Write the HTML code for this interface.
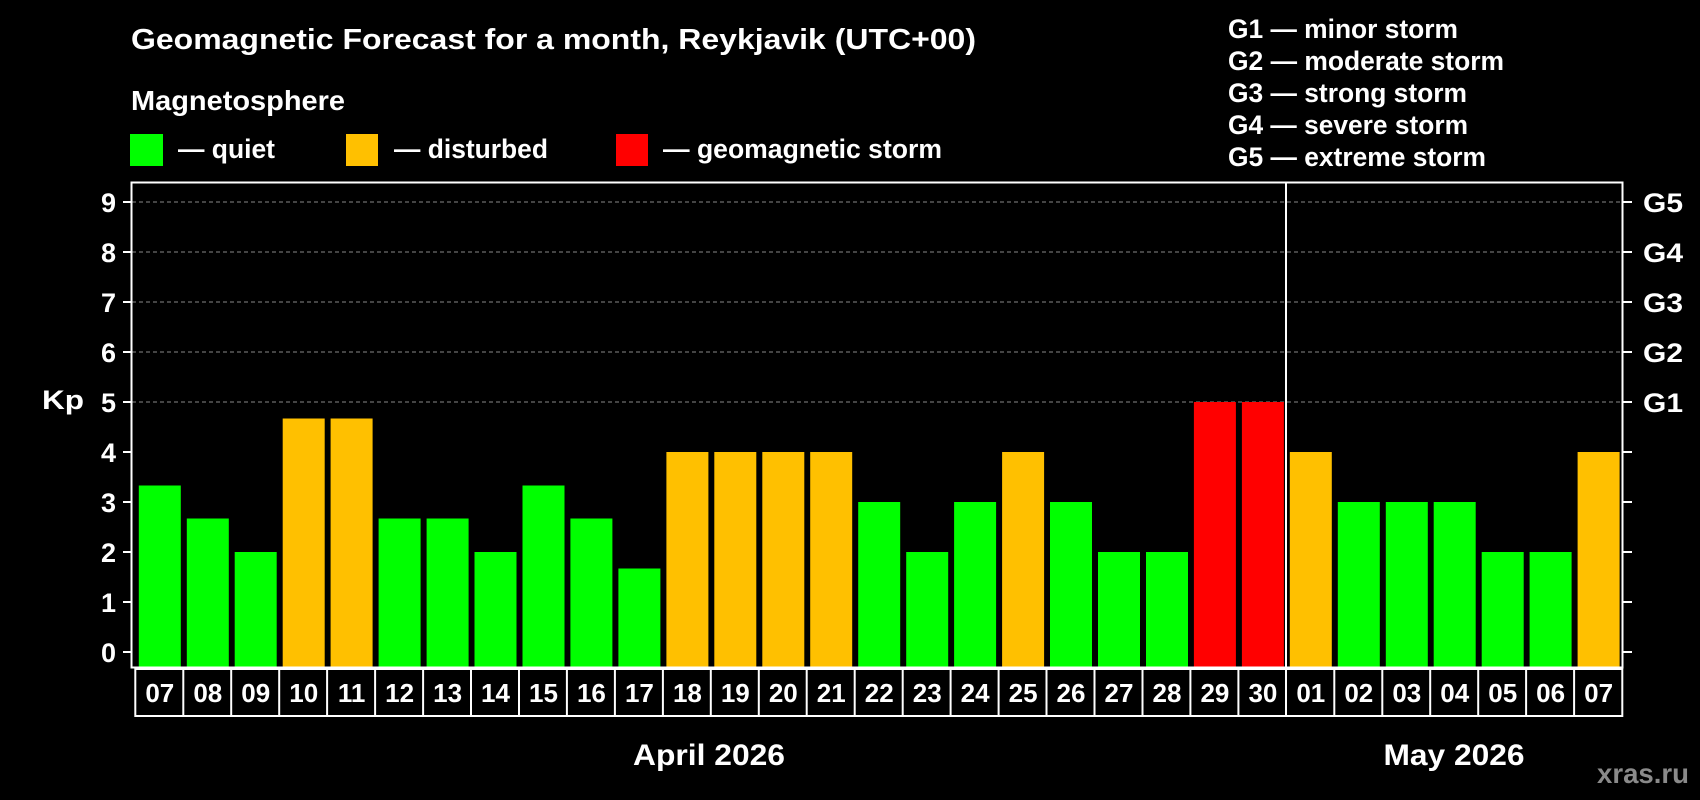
<!DOCTYPE html>
<html><head><meta charset="utf-8"><style>
html,body{margin:0;padding:0;background:#000;width:1700px;height:800px;overflow:hidden}
svg{display:block}
text{font-family:"Liberation Sans",Arial,sans-serif;font-weight:bold;fill:#fff}
</style></head><body>
<svg width="1700" height="800" viewBox="0 0 1700 800" xmlns="http://www.w3.org/2000/svg">
<rect width="1700" height="800" fill="#000"/>
<text x="131" y="49" font-size="29" textLength="845" lengthAdjust="spacingAndGlyphs">Geomagnetic Forecast for a month, Reykjavik (UTC+00)</text>
<text x="131" y="110" font-size="27.5" textLength="214" lengthAdjust="spacingAndGlyphs">Magnetosphere</text>
<rect x="130" y="134" width="33" height="32" fill="#00ff00"/>
<text x="178" y="158" font-size="27" textLength="97" lengthAdjust="spacingAndGlyphs">— quiet</text>
<rect x="346" y="134" width="32" height="32" fill="#ffc000"/>
<text x="394" y="158" font-size="27" textLength="154" lengthAdjust="spacingAndGlyphs">— disturbed</text>
<rect x="616" y="134" width="32" height="32" fill="#ff0000"/>
<text x="663" y="158" font-size="27" textLength="279" lengthAdjust="spacingAndGlyphs">— geomagnetic storm</text>
<g font-size="27">
<text x="1228" y="38" textLength="230" lengthAdjust="spacingAndGlyphs">G1 — minor storm</text>
<text x="1228" y="70" textLength="276" lengthAdjust="spacingAndGlyphs">G2 — moderate storm</text>
<text x="1228" y="102" textLength="239" lengthAdjust="spacingAndGlyphs">G3 — strong storm</text>
<text x="1228" y="134" textLength="240" lengthAdjust="spacingAndGlyphs">G4 — severe storm</text>
<text x="1228" y="166" textLength="258" lengthAdjust="spacingAndGlyphs">G5 — extreme storm</text>
</g>
<g stroke="#888" stroke-width="1" stroke-dasharray="4,3">
<line x1="132" x2="1622" y1="202" y2="202"/>
<line x1="132" x2="1622" y1="252" y2="252"/>
<line x1="132" x2="1622" y1="302" y2="302"/>
<line x1="132" x2="1622" y1="352" y2="352"/>
<line x1="132" x2="1622" y1="402" y2="402"/>
</g>
<g>
<rect x="138.8" y="485.5" width="42" height="182" fill="#00ff00"/>
<rect x="186.8" y="518.5" width="42" height="149" fill="#00ff00"/>
<rect x="234.7" y="552" width="42" height="116" fill="#00ff00"/>
<rect x="282.7" y="418.5" width="42" height="249" fill="#ffc000"/>
<rect x="330.6" y="418.5" width="42" height="249" fill="#ffc000"/>
<rect x="378.6" y="518.5" width="42" height="149" fill="#00ff00"/>
<rect x="426.6" y="518.5" width="42" height="149" fill="#00ff00"/>
<rect x="474.5" y="552" width="42" height="116" fill="#00ff00"/>
<rect x="522.5" y="485.5" width="42" height="182" fill="#00ff00"/>
<rect x="570.4" y="518.5" width="42" height="149" fill="#00ff00"/>
<rect x="618.4" y="568.5" width="42" height="99" fill="#00ff00"/>
<rect x="666.4" y="452" width="42" height="216" fill="#ffc000"/>
<rect x="714.3" y="452" width="42" height="216" fill="#ffc000"/>
<rect x="762.3" y="452" width="42" height="216" fill="#ffc000"/>
<rect x="810.2" y="452" width="42" height="216" fill="#ffc000"/>
<rect x="858.2" y="502" width="42" height="166" fill="#00ff00"/>
<rect x="906.2" y="552" width="42" height="116" fill="#00ff00"/>
<rect x="954.1" y="502" width="42" height="166" fill="#00ff00"/>
<rect x="1002.1" y="452" width="42" height="216" fill="#ffc000"/>
<rect x="1050" y="502" width="42" height="166" fill="#00ff00"/>
<rect x="1098" y="552" width="42" height="116" fill="#00ff00"/>
<rect x="1146" y="552" width="42" height="116" fill="#00ff00"/>
<rect x="1193.9" y="402" width="42" height="266" fill="#ff0000"/>
<rect x="1241.9" y="402" width="42" height="266" fill="#ff0000"/>
<rect x="1289.8" y="452" width="42" height="216" fill="#ffc000"/>
<rect x="1337.8" y="502" width="42" height="166" fill="#00ff00"/>
<rect x="1385.8" y="502" width="42" height="166" fill="#00ff00"/>
<rect x="1433.7" y="502" width="42" height="166" fill="#00ff00"/>
<rect x="1481.7" y="552" width="42" height="116" fill="#00ff00"/>
<rect x="1529.6" y="552" width="42" height="116" fill="#00ff00"/>
<rect x="1577.6" y="452" width="42" height="216" fill="#ffc000"/>
</g>
<rect x="131.5" y="182.5" width="1491" height="485" fill="none" stroke="#fff" stroke-width="2"/>
<line x1="1286" x2="1286" y1="182" y2="716" stroke="#fff" stroke-width="2"/>
<g stroke="#fff" stroke-width="2">
<line x1="123" x2="131" y1="202" y2="202"/><line x1="123" x2="131" y1="252" y2="252"/>
<line x1="123" x2="131" y1="302" y2="302"/><line x1="123" x2="131" y1="352" y2="352"/>
<line x1="123" x2="131" y1="402" y2="402"/><line x1="123" x2="131" y1="452" y2="452"/>
<line x1="123" x2="131" y1="502" y2="502"/><line x1="123" x2="131" y1="552" y2="552"/>
<line x1="123" x2="131" y1="602" y2="602"/><line x1="123" x2="131" y1="652" y2="652"/>
<line x1="1623" x2="1632" y1="202" y2="202"/><line x1="1623" x2="1632" y1="252" y2="252"/>
<line x1="1623" x2="1632" y1="302" y2="302"/><line x1="1623" x2="1632" y1="352" y2="352"/>
<line x1="1623" x2="1632" y1="402" y2="402"/><line x1="1623" x2="1632" y1="452" y2="452"/>
<line x1="1623" x2="1632" y1="502" y2="502"/><line x1="1623" x2="1632" y1="552" y2="552"/>
<line x1="1623" x2="1632" y1="602" y2="602"/><line x1="1623" x2="1632" y1="652" y2="652"/>
</g>
<g font-size="27" text-anchor="end">
<text x="116" y="212">9</text><text x="116" y="262">8</text><text x="116" y="312">7</text>
<text x="116" y="362">6</text><text x="116" y="412">5</text><text x="116" y="462">4</text>
<text x="116" y="512">3</text><text x="116" y="562">2</text><text x="116" y="612">1</text>
<text x="116" y="662">0</text>
</g>
<text x="42" y="409" font-size="27" textLength="42" lengthAdjust="spacingAndGlyphs">Kp</text>
<g font-size="27">
<text x="1643" y="212" textLength="40" lengthAdjust="spacingAndGlyphs">G5</text>
<text x="1643" y="262" textLength="40" lengthAdjust="spacingAndGlyphs">G4</text>
<text x="1643" y="312" textLength="40" lengthAdjust="spacingAndGlyphs">G3</text>
<text x="1643" y="362" textLength="40" lengthAdjust="spacingAndGlyphs">G2</text>
<text x="1643" y="412" textLength="40" lengthAdjust="spacingAndGlyphs">G1</text>
</g>
<rect x="135.3" y="669" width="1487" height="47" stroke="#fff" stroke-width="2" fill="none"/>
<g stroke="#fff" stroke-width="2">
<line x1="183.3" x2="183.3" y1="669" y2="716"/><line x1="231.2" x2="231.2" y1="669" y2="716"/>
<line x1="279.2" x2="279.2" y1="669" y2="716"/><line x1="327.1" x2="327.1" y1="669" y2="716"/>
<line x1="375.1" x2="375.1" y1="669" y2="716"/><line x1="423.1" x2="423.1" y1="669" y2="716"/>
<line x1="471" x2="471" y1="669" y2="716"/><line x1="519" x2="519" y1="669" y2="716"/>
<line x1="566.9" x2="566.9" y1="669" y2="716"/><line x1="614.9" x2="614.9" y1="669" y2="716"/>
<line x1="662.9" x2="662.9" y1="669" y2="716"/><line x1="710.8" x2="710.8" y1="669" y2="716"/>
<line x1="758.8" x2="758.8" y1="669" y2="716"/><line x1="806.7" x2="806.7" y1="669" y2="716"/>
<line x1="854.7" x2="854.7" y1="669" y2="716"/><line x1="902.7" x2="902.7" y1="669" y2="716"/>
<line x1="950.6" x2="950.6" y1="669" y2="716"/><line x1="998.6" x2="998.6" y1="669" y2="716"/>
<line x1="1046.5" x2="1046.5" y1="669" y2="716"/><line x1="1094.5" x2="1094.5" y1="669" y2="716"/>
<line x1="1142.5" x2="1142.5" y1="669" y2="716"/><line x1="1190.4" x2="1190.4" y1="669" y2="716"/>
<line x1="1238.4" x2="1238.4" y1="669" y2="716"/>
<line x1="1334.3" x2="1334.3" y1="669" y2="716"/><line x1="1382.3" x2="1382.3" y1="669" y2="716"/>
<line x1="1430.2" x2="1430.2" y1="669" y2="716"/><line x1="1478.2" x2="1478.2" y1="669" y2="716"/>
<line x1="1526.1" x2="1526.1" y1="669" y2="716"/><line x1="1574.1" x2="1574.1" y1="669" y2="716"/>
</g>
<g font-size="26" text-anchor="middle">
<text x="159.8" y="702">07</text><text x="207.8" y="702">08</text><text x="255.7" y="702">09</text>
<text x="303.7" y="702">10</text><text x="351.6" y="702">11</text><text x="399.6" y="702">12</text>
<text x="447.6" y="702">13</text><text x="495.5" y="702">14</text><text x="543.5" y="702">15</text>
<text x="591.4" y="702">16</text><text x="639.4" y="702">17</text><text x="687.4" y="702">18</text>
<text x="735.3" y="702">19</text><text x="783.3" y="702">20</text><text x="831.2" y="702">21</text>
<text x="879.2" y="702">22</text><text x="927.2" y="702">23</text><text x="975.1" y="702">24</text>
<text x="1023.1" y="702">25</text><text x="1071" y="702">26</text><text x="1119" y="702">27</text>
<text x="1167" y="702">28</text><text x="1214.9" y="702">29</text><text x="1262.9" y="702">30</text>
<text x="1310.8" y="702">01</text><text x="1358.8" y="702">02</text><text x="1406.8" y="702">03</text>
<text x="1454.7" y="702">04</text><text x="1502.7" y="702">05</text><text x="1550.6" y="702">06</text>
<text x="1598.6" y="702">07</text>
</g>
<text x="709" y="765" font-size="30" text-anchor="middle" textLength="152" lengthAdjust="spacingAndGlyphs">April 2026</text>
<text x="1454" y="765" font-size="30" text-anchor="middle" textLength="141" lengthAdjust="spacingAndGlyphs">May 2026</text>
<text x="1643" y="783" font-size="28" text-anchor="middle" textLength="92" lengthAdjust="spacingAndGlyphs" style="fill:#8a8a8a">xras.ru</text>
</svg>
</body></html>
